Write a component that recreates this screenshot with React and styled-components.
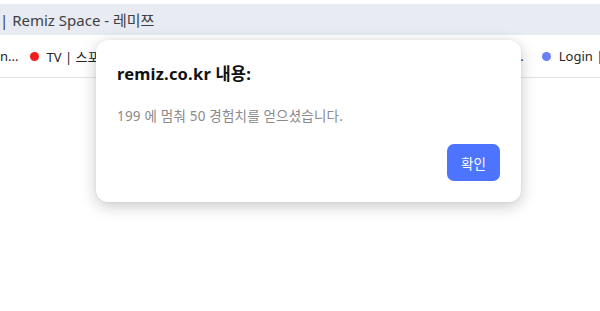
import React from "react";
import styled, { createGlobalStyle } from "styled-components";

const Global = createGlobalStyle`
  html, body { margin: 0; padding: 0; background: #ffffff; }
  body { font-family: "Noto Sans", "Noto Sans CJK KR", sans-serif; width: 600px; height: 311px; overflow: hidden; }
`;

const Page = styled.div`
  position: relative;
  width: 600px;
  height: 311px;
  padding-top: 4px;
  box-sizing: border-box;
`;

const TitleBar = styled.div`
  height: 31px;
  background: #e8ebf2;
  display: flex;
  align-items: center;
  font-size: 15px;
  color: #3c3f44;
  white-space: nowrap;
  overflow: hidden;
`;

const Bookmarks = styled.div`
  height: 42px;
  border-bottom: 1px solid #e3e4e8;
  display: flex;
  align-items: center;
  font-size: 13px;
  color: #24272b;
  white-space: nowrap;
  overflow: hidden;
`;

const Mark = styled.div`
  display: flex;
  align-items: center;
  gap: 8px;
  margin-left: ${(p) => p.$ml}px;
`;

const Dot = styled.span`
  width: 9px;
  height: 9px;
  border-radius: 50%;
  background: ${(p) => p.$c};
`;

const Dialog = styled.div`
  position: absolute;
  left: 96px;
  top: 40px;
  width: 425px;
  height: 162px;
  box-sizing: border-box;
  background: #ffffff;
  border-radius: 12px;
  box-shadow: 0 4px 16px rgba(0, 0, 0, 0.22), 0 0 2px rgba(0, 0, 0, 0.08);
  padding: 22px 21px 21px 21px;
  display: flex;
  flex-direction: column;
`;

const DTitle = styled.div`
  font-size: 16.5px;
  font-weight: 700;
  letter-spacing: 0.2px;
  color: #111;
  line-height: 24px;
`;

const DMessage = styled.div`
  margin-top: 21px;
  font-size: 13.5px;
  letter-spacing: 0.2px;
  color: #8a8a8a;
  line-height: 18px;
`;

const Actions = styled.div`
  margin-top: auto;
  display: flex;
  justify-content: flex-end;
`;

const OkButton = styled.button`
  width: 53px;
  height: 37px;
  border: none;
  border-radius: 7px;
  background: #4d74ff;
  color: #ffffff;
  font-family: "Noto Sans", "Noto Sans CJK KR", sans-serif;
  font-size: 13.5px;
  padding: 0;
`;

export default function App() {
  return (
    <>
      <Global />
      <Page>
        <TitleBar>| Remiz Space - 레미쯔</TitleBar>
        <Bookmarks>
          <Mark $ml={0}>n...</Mark>
          <Mark $ml={11}>
            <Dot $c="#f21b1b" />
            TV | 스포츠
          </Mark>
          <Mark $ml={402}>...</Mark>
          <Mark $ml={18}>
            <Dot $c="#6a7ff5" />
            Login |
          </Mark>
        </Bookmarks>
        <Dialog>
          <DTitle>remiz.co.kr 내용:</DTitle>
          <DMessage>199 에 멈춰 50 경험치를 얻으셨습니다.</DMessage>
          <Actions>
            <OkButton>확인</OkButton>
          </Actions>
        </Dialog>
      </Page>
    </>
  );
}
